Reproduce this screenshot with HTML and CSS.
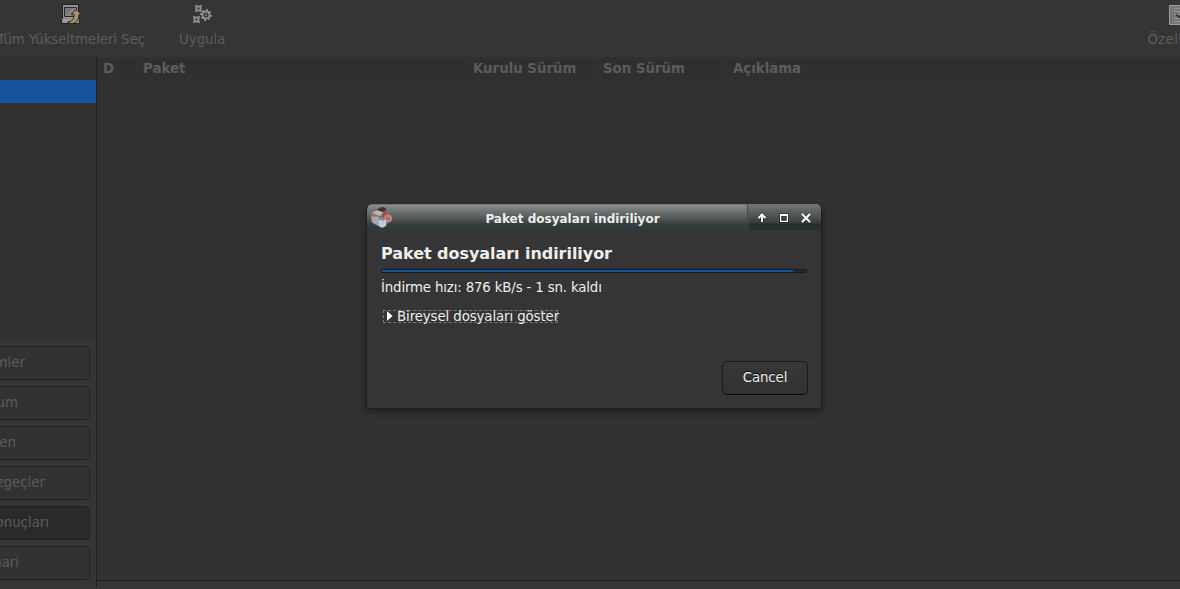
FILE: index.html
```
<!DOCTYPE html>
<html lang="tr">
<head>
  <meta charset="utf-8">
  <title>Paket dosyaları indiriliyor</title>
  <link rel="stylesheet" href="styles.css">
</head>
<body>

<div class="toolbar">
  <div class="tool select-all">
    <svg width="22" height="22" viewBox="0 0 22 22">
      <path d="M2.500 .5h16v14l1 1v4h-18v-4l1-1z" fill="#929292" stroke="#202020"/>
      <path d="M4.500 3.500h12v9h-12z" fill="#777" stroke="#292929"/>
      <path d="M5 11l8-7h3v8H5z" fill="#868686"/>
      <path d="M4 16.500h13" stroke="#aaa"/>
      <path d="M8 17.500c4 0 6-2 6-7h-3l5.200-5 5.300 5h-2.500c0 7-5 11-11 8z" fill="#a29469" stroke="#2b2618"/>
    </svg>
    <span>Tüm Yükseltmeleri Seç</span>
  </div>
  <div class="tool apply">
    <svg width="22" height="22" viewBox="0 0 22 22" fill="none" stroke="#909090">
      <path d="M4.500 2.500h4v4h-4zM2.500 13.500h4v4h-4z" stroke-width="2"/>
      <path d="M3 1.500h1.500M8.500 1.500H10M3 7.500h1.500M8.500 7.500H10M1 12.500h1.500M6.500 12.500H8M1 18.500h1.500M6.500 18.500H8"/>
      <circle cx="14" cy="11" r="3.500" stroke-width="2"/>
      <circle cx="14" cy="11" r="1.200" fill="#777" stroke="none"/>
      <path d="M15.300 5l-.5 2M12.700 17l.5-2M8 9.700l2 .5M20 12.300l-2-.5M10.600 6.400l1 1.700M17.400 15.600l-1-1.700M9.400 14.400l1.700-1M18.600 7.600l-1.700 1" stroke-width="2"/>
    </svg>
    <span>Uygula</span>
  </div>
  <div class="tool properties">
    <svg width="22" height="22" viewBox="0 0 22 22">
      <path d="M.5 1.500h21v19H.5z" fill="#777" stroke="#9a9a9a"/>
      <path d="M5 4.500h14M5 7.500h14M5 10.500h14M5 14.500h14M5 17.500h14" stroke="#959595"/>
      <path d="M2.500 8v1M2.500 12v1M2.500 16v1" stroke="#555"/>
      <path d="M7 10.500l3 2.500 4-4" fill="none" stroke="#3c3c3c" stroke-width="2"/>
    </svg>
    <span>Özellikler</span>
  </div>
</div>

<div class="main">
  <div class="sidebar">
    <div class="categories">
      <div class="selected"></div>
    </div>
    <div class="filters">
      <div class="filter"><span>Bölümler</span></div>
      <div class="filter f-status"><span>Durum</span></div>
      <div class="filter f-origin"><span>Köken</span></div>
      <div class="filter f-custom"><span>Özel Süzgeçler</span></div>
      <div class="filter f-results active"><span>Arama Sonuçları</span></div>
      <div class="filter f-arch"><span>Mimari</span></div>
    </div>
  </div>
  <div class="content">
    <div class="list">
      <div class="list-head">
        <div>D</div>
        <div></div>
        <div>Paket</div>
        <div>Kurulu Sürüm</div>
        <div>Son Sürüm</div>
        <div>Açıklama</div>
      </div>
    </div>
  </div>
</div>

<div class="dialog">
  <div class="titlebar">
    <svg class="app-icon" width="24" height="24" viewBox="0 0 24 24">
      <path d="M1 7l4-3 7-3 6 2 1 6-1 9-8 3-8-4z" fill="#777878"/>
      <path d="M1 9l8 2v9l-7-4z" fill="#a5a9ad"/>
      <path d="M6 4l6-3 4 1-1 4-8-1z" fill="#39322f"/>
      <path d="M2 7l5-3 7 3-4 3z" fill="#bcb5b2"/>
      <path d="M1 8l4 1v2l-4-1z" fill="#b06461"/>
      <path d="M13 6l3-2 2 5-4 4-3-1z" fill="#a04a47"/>
      <circle cx="18" cy="12.500" r="4" fill="#c17f87"/>
      <path d="M16 11l4 1-1 2-4-1z" fill="#b0606b"/>
      <path d="M9 14l7-1v7l-4 2-3-2z" fill="#c3cdda"/>
      <path d="M9 13l3-2 4 2-3 2z" fill="#858b94"/>
    </svg>
    <div class="title">Paket dosyaları indiriliyor</div>
    <div class="window-buttons">
      <svg width="74" height="26" viewBox="0 0 74 26">
        <g fill="none" stroke="#111" stroke-width="4" opacity=".4">
          <path d="M15 18v-7M11.500 14l3.500-3.500 3.500 3.500M34 11h6v6h-6zM55.500 10.500l7 7M62.500 10.500l-7 7"/>
        </g>
        <path d="M15 18v-7M11.500 14l3.500-3.500 3.500 3.500" fill="none" stroke="#fff" stroke-width="2"/>
        <path d="M33 10h8v8h-8zM34.200 12v4.800h5.600V12z" fill="#fff" fill-rule="evenodd"/>
        <path d="M55 10l8 8M63 10l-8 8" stroke="#fff" stroke-width="2.200"/>
      </svg>
    </div>
  </div>
  <div class="dialog-body">
    <h1>Paket dosyaları indiriliyor</h1>
    <div class="progress"><div class="bar"></div></div>
    <p class="speed">İndirme hızı: 876 kB/s - 1 sn. kaldı</p>
    <div class="expander">
      <svg width="6" height="10" viewBox="0 0 6 10"><path d="M0 0l5.500 5L0 10z" fill="#fff"/></svg>
      <span>Bireysel dosyaları göster</span>
    </div>
    <button type="button" class="cancel">Cancel</button>
  </div>
</div>

</body>
</html>
```

FILE: styles.css
```
* {
  box-sizing: border-box;
}

body {
  margin: 0;
  width: 1180px;
  height: 589px;
  overflow: hidden;
  display: flex;
  flex-direction: column;
  background: #353535;
  color: #5c5c5c;
  font-family: "DejaVu Sans", sans-serif;
  font-size: 13.33px;
  line-height: 16px;
  white-space: nowrap;
}

.toolbar {
  height: 57px;
  flex: none;
  display: flex;
  padding-top: 4px;
}

.tool {
  display: flex;
  flex-direction: column;
  align-items: center;
  gap: 6px;
  flex: none;
}

.select-all {
  width: 146px;
  margin-left: -2px;
  letter-spacing: -0.08px;
}

.apply {
  margin-left: 35px;
}

.apply svg {
  margin-left: 2px;
}

.properties {
  width: 66px;
  margin-left: auto;
  margin-right: -33px;
  letter-spacing: 0.3px;
}

.main {
  flex: 1;
  display: flex;
  min-height: 0;
}

.sidebar {
  width: 97px;
  flex: none;
  height: 530px;
  border-right: 1px solid #202020;
}

.categories {
  height: 283px;
  padding-top: 23px;
  background: #323232;
}

.selected {
  height: 23px;
  background: #15539e;
}

.filters {
  display: flex;
  flex-direction: column;
  gap: 6px;
  padding: 6px 6px 0 0;
}

.filter {
  height: 34px;
  border: 1px solid #202020;
  border-left: none;
  border-radius: 0 5px 5px 0;
  background: #323232;
  padding: 8px 64px 0 0;
  overflow: hidden;
  display: flex;
  justify-content: flex-end;
}

.filter span {
  flex: none;
}

.f-status { padding-right: 71px; }
.f-origin { padding-right: 73px; }
.f-custom { padding-right: 44px; }
.f-results { padding-right: 40px; }
.f-arch { padding-right: 70px; }

.filter.active {
  background: #2a2a2a;
}

.content {
  flex: 1;
}

.list {
  height: 524px;
  background: #323232;
  border-bottom: 1px solid #202020;
}

.list-head {
  display: grid;
  grid-template-columns: 20px 20px 330px 130px 130px 1fr;
  height: 25px;
  background: #303030;
  border-bottom: 1px solid #363636;
  font-weight: bold;
}

.list-head div {
  border-right: 1px solid #353535;
  padding: 4px 0 0 6px;
}

.list-head div:last-child {
  border-right: none;
}

.dialog {
  position: absolute;
  left: 366px;
  top: 204px;
  width: 456px;
  height: 205px;
  border: 1px solid #182022;
  border-top: none;
  border-radius: 6px 6px 3px 3px;
  background: #353535;
  box-shadow: 0 3px 10px rgba(0, 0, 0, 0.4);
  color: #eeeeec;
  overflow: hidden;
}

.titlebar {
  display: flex;
  height: 28px;
  background: linear-gradient(#5d6060 0, #8b8e8e 1px, #737777 6px, #4b5151 16px, #343c3e 20px, #32393b 24px, #353535 28px);
}

.app-icon {
  flex: none;
  margin: 2px 0 0 3px;
}

.title {
  flex: 1;
  padding: 7px 0 0 4px;
  text-align: center;
  font-size: 12px;
  font-weight: bold;
}

.window-buttons {
  width: 74px;
  height: 26px;
  background: linear-gradient(#737676 0, #555a5a 10px, #363b3b 19px, #262b2c 20px, #2c3132 26px);
  border-left: 1px solid #454a4a;
  border-bottom: 1px solid #272d2e;
  border-bottom-left-radius: 5px;
}

.window-buttons svg {
  display: block;
  margin-left: -1px;
}

.dialog-body {
  display: flex;
  flex-direction: column;
  padding: 12px 13px 0 14px;
}

h1 {
  margin: 0;
  font-size: 16px;
  line-height: 20px;
  letter-spacing: -0.05px;
}

.progress {
  height: 4px;
  margin-top: 5px;
  width: 426px;
  border: 1px solid #1b1b1b;
  border-radius: 2px;
  background: #282828;
}

.bar {
  width: 412px;
  height: 2px;
  background: #15539e;
  border-right: 1px solid #0c2b51;
}

.speed {
  margin: 7px 0 0;
  letter-spacing: -0.15px;
}

.expander {
  display: flex;
  align-items: center;
  width: 175px;
  height: 13px;
  margin: 14px 0 0 2px;
  padding-left: 3px;
  gap: 4px;
  border: 1px dashed #777;
  letter-spacing: -0.1px;
}

.expander svg {
  flex: none;
  margin-top: -1px;
}

.cancel {
  align-self: flex-end;
  width: 86px;
  height: 34px;
  margin-top: 38px;
  border: 1px solid #1b1b1b;
  border-bottom-color: #070707;
  border-radius: 5px;
  background: linear-gradient(#373737, #323232);
  color: #eeeeec;
  font: inherit;
  letter-spacing: -0.1px;
  text-shadow: 0 -1px rgba(0, 0, 0, 0.7);
}
```
